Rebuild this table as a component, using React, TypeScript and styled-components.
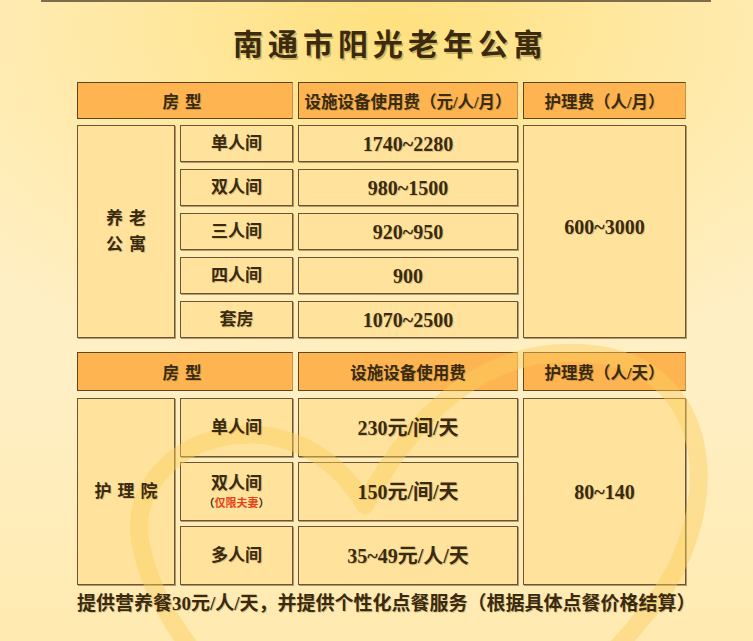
import React from "react";
import styled, { createGlobalStyle } from "styled-components";

const Global = createGlobalStyle`
  html, body { margin: 0; padding: 0; }
  body { width: 753px; height: 641px; overflow: hidden; }
  * { box-sizing: border-box; }
`;

const FONT = `"Liberation Serif", "Noto Sans CJK SC", serif`;
const INK = "#3a2a10";

const Page = styled.div`
  position: relative;
  width: 753px;
  height: 641px;
  overflow: hidden;
  font-family: ${FONT};
  color: ${INK};
  background:
    radial-gradient(ellipse 75% 55% at 52% 4%, #ffe17f 0%, #ffe8a2 45%, rgba(255, 240, 200, 0) 100%),
    linear-gradient(180deg, #fff0c6 0%, #ffefc4 60%, #ffeab0 100%);
  display: flex;
  flex-direction: column;
  align-items: stretch;
`;

const TopRule = styled.div`
  height: 2px;
  margin: 0 42px 0 41px;
  background: #7e6d4d;
`;

const Title = styled.h1`
  position: relative;
  z-index: 2;
  margin: 25px 0 0 28px;
  text-align: center;
  font-size: 30px;
  line-height: 36px;
  font-weight: 700;
  letter-spacing: 5px;
  color: #3b2a0e;
  text-shadow: 1.5px 1.5px 0 rgba(150, 130, 50, 0.45);
`;

const Table = styled.section<{ $top: number }>`
  margin: ${(p) => p.$top}px 0 0 77px;
  width: 609px;
  display: flex;
  flex-direction: column;
`;

const HeadRow = styled.div<{ $h: number; $after: number }>`
  display: grid;
  grid-template-columns: 216px 220px 163px;
  column-gap: 5px;
  height: ${(p) => p.$h}px;
  margin-bottom: ${(p) => p.$after}px;
`;

const HeadCell = styled.div<{ $spaced?: boolean }>`
  background: #fdb451;
  border: 1px solid #5f4420;
  border-right-color: #c9904a;
  display: flex;
  align-items: center;
  justify-content: center;
  font-size: 16.5px;
  font-weight: 700;
  letter-spacing: ${(p) => (p.$spaced ? "6px" : "0")};
  text-shadow: 1px 1px 0 rgba(140, 110, 40, 0.35);
  white-space: nowrap;
`;

const Txt = styled.span`
  position: relative;
  z-index: 2;
`;

const Body = styled.div<{ $rows: number; $rowH: number; $gap: number }>`
  display: grid;
  grid-template-columns: 98px 113px 220px 163px;
  grid-template-rows: repeat(${(p) => p.$rows}, ${(p) => p.$rowH}px);
  column-gap: 5px;
  row-gap: ${(p) => p.$gap}px;
`;

const Cell = styled.div<{ $col: number; $span?: number; $lift?: number }>`
  grid-column: ${(p) => p.$col};
  grid-row: ${(p) => (p.$span ? `1 / span ${p.$span}` : "auto")};
  background: #ffe39c;
  border: 1px solid #6e5430;
  box-shadow: 1px 1px 0 rgba(110, 84, 48, 0.55);
  display: flex;
  flex-direction: column;
  align-items: center;
  justify-content: center;
  padding-bottom: ${(p) => p.$lift ?? 0}px;
  font-weight: 700;
  text-shadow: 1px 1px 0 rgba(140, 110, 40, 0.3);
  white-space: nowrap;
`;

const GroupLabel = styled.div`
  position: relative;
  z-index: 2;
  font-size: 17px;
  line-height: 26px;
  letter-spacing: 6px;
  padding-left: 6px;
  text-align: center;
`;

const RoomName = styled.div`
  position: relative;
  z-index: 2;
  font-size: 17px;
  line-height: 22px;
`;

const Note = styled.div`
  position: relative;
  z-index: 2;
  font-size: 11px;
  line-height: 16px;
  color: ${INK};
  text-shadow: none;
  span { color: #e5421b; }
`;

const Value = styled.div`
  position: relative;
  z-index: 2;
  font-size: 20px;
  line-height: 24px;
`;

const Footer = styled.p`
  position: relative;
  z-index: 2;
  margin: 7px 0 0 77px;
  width: 612px;
  text-align: center;
  font-size: 19px;
  line-height: 24px;
  font-weight: 700;
  white-space: nowrap;
  text-shadow: 1px 1px 0 rgba(140, 110, 40, 0.3);
`;

const Heart = styled.svg`
  position: absolute;
  z-index: 1;
  left: 0;
  top: 0;
  width: 753px;
  height: 641px;
  pointer-events: none;
`;

const apartments = [
  { room: "单人间", price: "1740~2280" },
  { room: "双人间", price: "980~1500" },
  { room: "三人间", price: "920~950" },
  { room: "四人间", price: "900" },
  { room: "套房", price: "1070~2500" },
];

const nursing = [
  { room: "单人间", price: "230元/间/天" },
  { room: "双人间", price: "150元/间/天", note: "仅限夫妻" },
  { room: "多人间", price: "35~49元/人/天" },
];

export default function App() {
  return (
    <Page>
      <Global />
      <TopRule />
      <Title>南通市阳光老年公寓</Title>

      <Table $top={19}>
        <HeadRow $h={37} $after={6}>
          <HeadCell $spaced><Txt>房型</Txt></HeadCell>
          <HeadCell><Txt>设施设备使用费（元/人/月）</Txt></HeadCell>
          <HeadCell><Txt>护理费（人/月）</Txt></HeadCell>
        </HeadRow>
        <Body $rows={5} $rowH={37} $gap={7}>
          <Cell $col={1} $span={5}>
            <GroupLabel>
              养老
              <br />
              公寓
            </GroupLabel>
          </Cell>
          {apartments.map((a) => (
            <React.Fragment key={a.room}>
              <Cell $col={2}>
                <RoomName>{a.room}</RoomName>
              </Cell>
              <Cell $col={3}>
                <Value>{a.price}</Value>
              </Cell>
            </React.Fragment>
          ))}
          <Cell $col={4} $span={5} $lift={10}>
            <Value>600~3000</Value>
          </Cell>
        </Body>
      </Table>

      <Table $top={14}>
        <HeadRow $h={39} $after={7}>
          <HeadCell $spaced><Txt>房型</Txt></HeadCell>
          <HeadCell><Txt>设施设备使用费</Txt></HeadCell>
          <HeadCell><Txt>护理费（人/天）</Txt></HeadCell>
        </HeadRow>
        <Body $rows={3} $rowH={59} $gap={5}>
          <Cell $col={1} $span={3}>
            <GroupLabel>护理院</GroupLabel>
          </Cell>
          {nursing.map((n) => (
            <React.Fragment key={n.room}>
              <Cell $col={2}>
                <RoomName>{n.room}</RoomName>
                {n.note && (
                  <Note>
                    （<span>{n.note}</span>）
                  </Note>
                )}
              </Cell>
              <Cell $col={3}>
                <Value>{n.price}</Value>
              </Cell>
            </React.Fragment>
          ))}
          <Cell $col={4} $span={3}>
            <Value>80~140</Value>
          </Cell>
        </Body>
      </Table>

      <Footer>提供营养餐30元/人/天，并提供个性化点餐服务（根据具体点餐价格结算）</Footer>

      <Heart viewBox="0 0 753 641">
        <path
          d="M 410 840 C 300 760 160 660 140 540 C 125 440 290 380 365 505 C 420 400 500 340 600 355 C 720 375 725 520 645 615 C 585 690 480 780 410 840 Z"
          fill="none"
          stroke="#fbcf5f"
          strokeOpacity={0.45}
          strokeWidth={18}
          strokeLinejoin="round"
        />
      </Heart>
    </Page>
  );
}
